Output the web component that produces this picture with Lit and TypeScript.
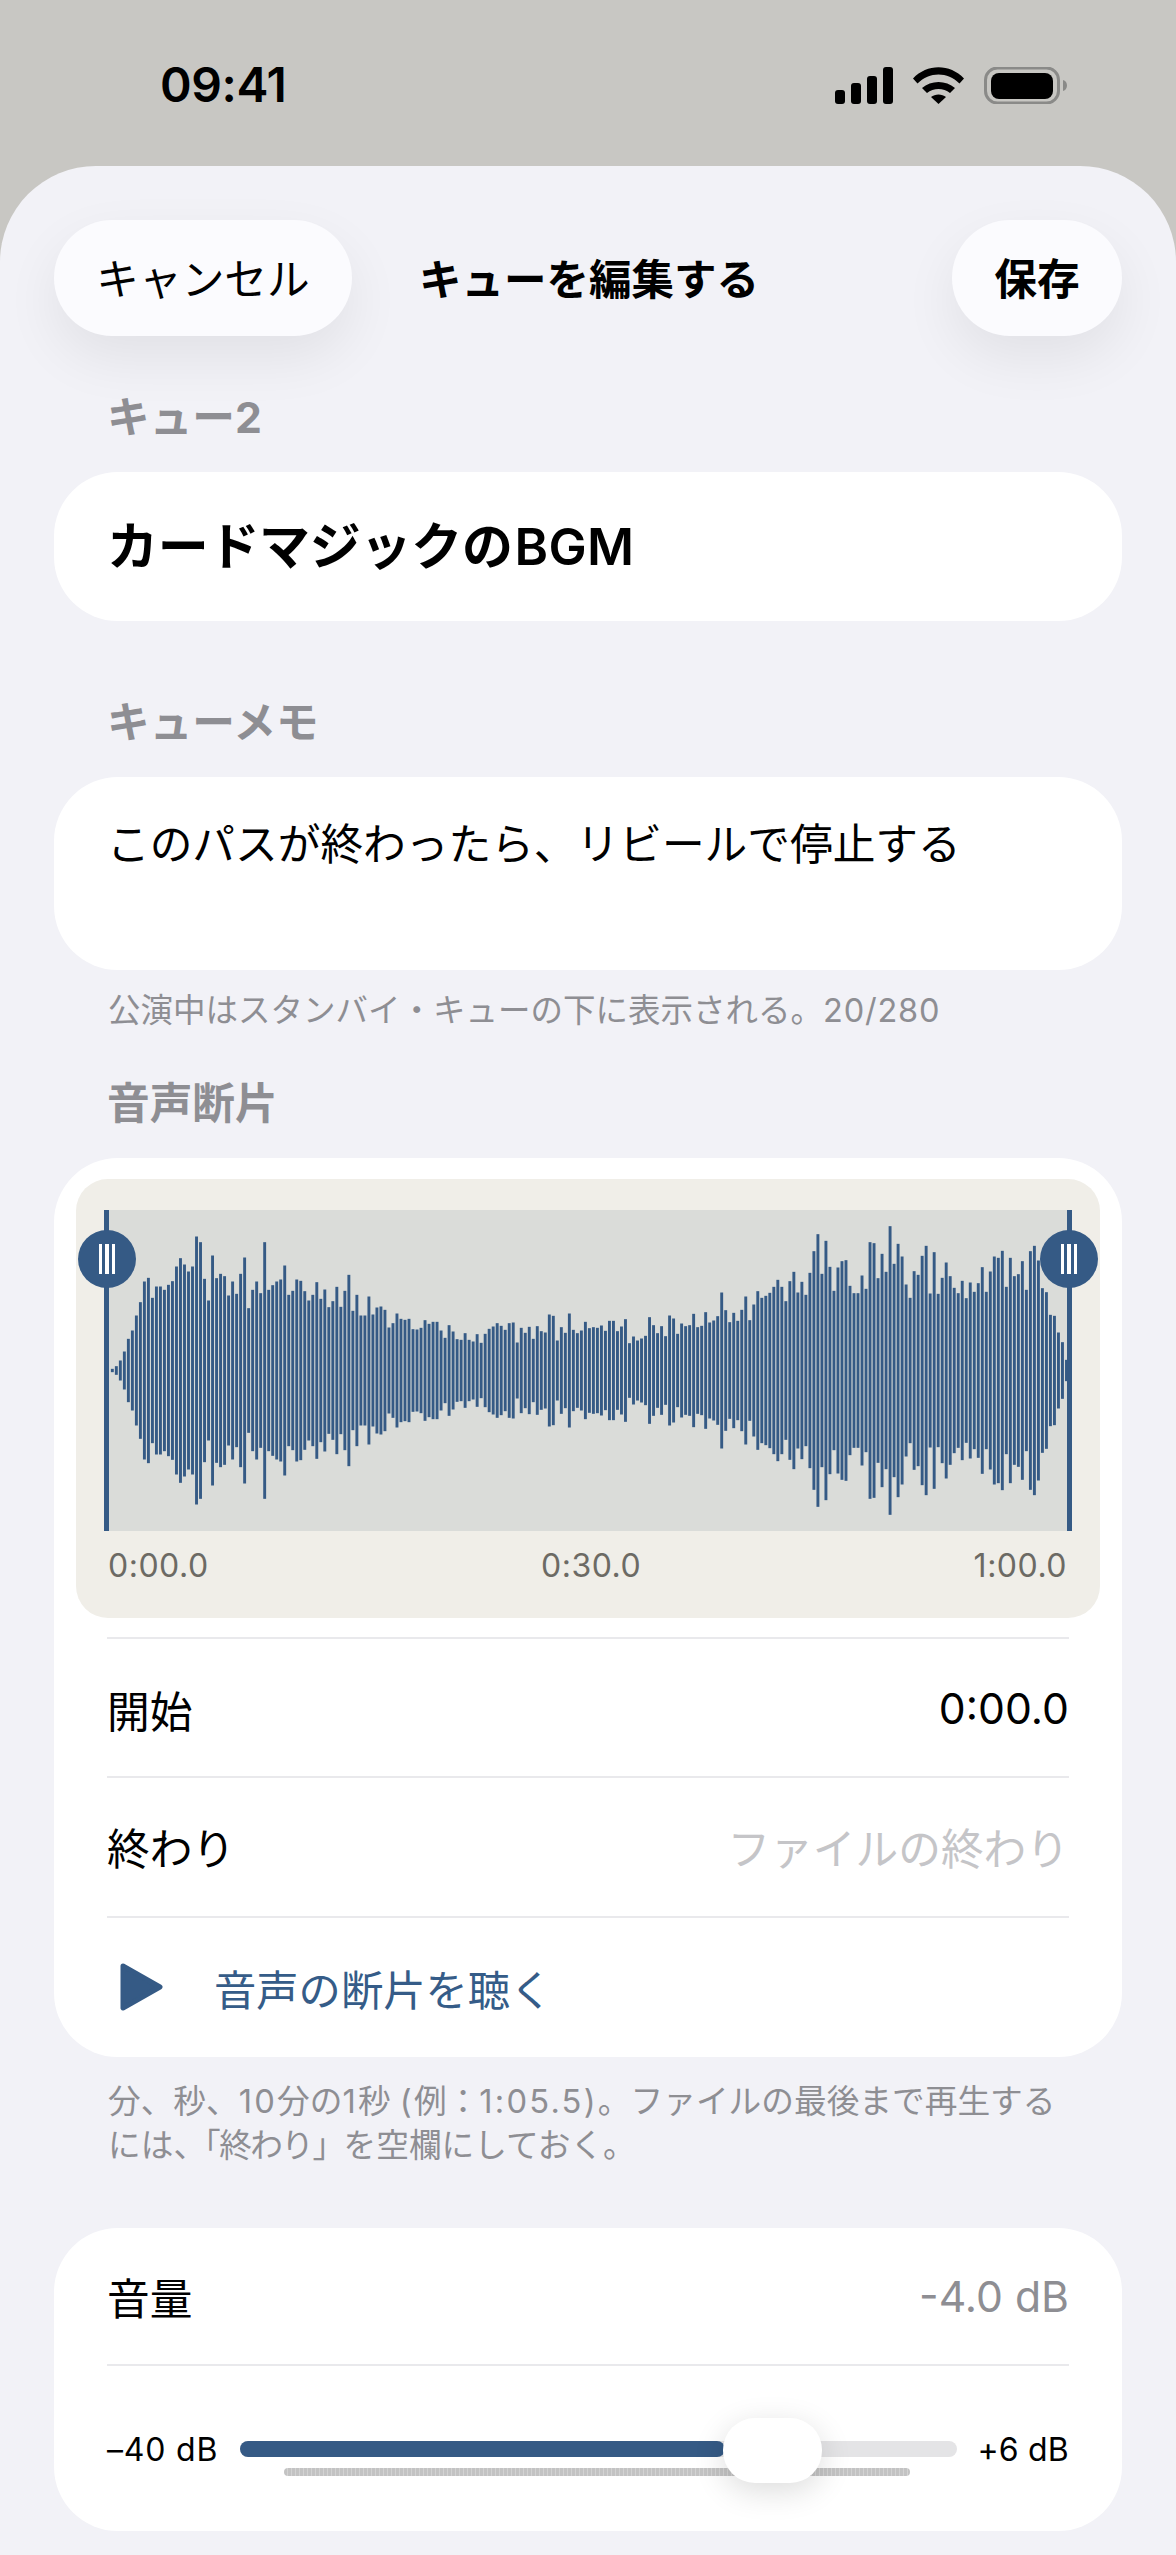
import { LitElement, html, css, svg } from "lit";
import { customElement } from "lit/decorators.js";

const TOPS = [
475,467,450,423,385,360,315,275,213,202,262,228,228,238,223,212,168,143,162,183,168,78,95,205,270,135,203,190,197,255,213,250,190,141,293,238,213,248,95,238,224,213,207,165,253,241,207,211,242,270,
253,215,265,237,290,272,229,289,241,193,301,253,315,315,258,312,291,288,298,351,338,309,325,328,325,356,357,352,329,340,334,334,360,382,344,363,386,388,368,388,393,371,397,370,355,348,338,346,358,338,
336,396,352,367,349,385,347,362,366,312,316,390,350,367,309,358,368,360,334,353,350,352,345,361,331,331,362,348,326,398,378,390,384,376,320,344,368,347,377,315,324,370,339,347,344,310,350,346,305,336,
330,317,246,299,335,307,331,298,258,329,282,242,262,256,247,229,208,229,272,212,184,246,214,253,187,122,71,190,91,169,241,171,152,149,226,248,248,195,235,95,98,203,130,184,47,160,100,138,222,262,
182,193,136,106,249,125,250,202,156,197,232,248,211,263,216,244,218,170,244,183,138,142,121,229,142,197,191,152,238,122,106,150,233,245,313,316,366,395,448,
];

@customElement("app-root")
export class AppRoot extends LitElement {
  static styles = css`
    :host {
      display: block;
      width: 1176px;
      height: 2555px;
      overflow: hidden;
      background: #c8c7c3;
      font-family: Inter, "Noto Sans CJK JP", sans-serif;
      color: #000;
      font-size: 42.7px;
    }
    .status {
      height: 166px;
      box-sizing: border-box;
      display: flex;
      justify-content: space-between;
      padding: 67px 109px 0 160px;
    }
    .clock {
      font-size: 48px;
      font-weight: 600;
      line-height: 36px;
      letter-spacing: -0.4px;
    }
    .status svg { display: block; }
    .sheet {
      box-sizing: border-box;
      height: 2389px;
      background: #f2f2f7;
      border-radius: 96px 96px 0 0;
      padding: 54px 54px 0;
      overflow: hidden;
    }
    .nav { display: flex; align-items: center; height: 116px; }
    .btn {
      box-sizing: border-box;
      height: 116px;
      border-radius: 58px;
      background: #fbfbfe;
      box-shadow: 0 22px 55px rgba(0, 0, 0, 0.07);
      display: flex;
      align-items: center;
      justify-content: center;
      padding-bottom: 4px;
    }
    .cancel { width: 298px; }
    .save { width: 170px; margin-left: auto; font-weight: 700; }
    .title { margin-left: 67px; font-weight: 700; padding-bottom: 4px; font-size: 42.5px; }
    .label {
      color: #8e8e93;
      font-weight: 700;
      line-height: 50px;
      padding-left: 53px;
      margin-bottom: 29px;
    }
    .l1 { margin-top: 57px; }
    .l2 { margin-top: 77px; }
    .l3 { margin-top: 46px; }
    .card { background: #fff; border-radius: 64px; }
    .name {
      height: 149px;
      box-sizing: border-box;
      display: flex;
      align-items: center;
      padding: 0 53px 7px;
      font-size: 51px;
      font-weight: 700;
      letter-spacing: -0.3px;
    }
    .name .latin { margin-left: 2px; font-weight: 600; letter-spacing: 0.3px; }
    .memo {
      height: 193px;
      box-sizing: border-box;
      padding: 38px 53px;
      line-height: 60px;
    }
    .hint {
      font-size: 32.7px;
      line-height: 44px;
      color: #8e8e93;
      padding-left: 54px;
    }
    .hint .num { letter-spacing: 2.2px; }
    .hint .tight { letter-spacing: -1.6px; }
    .h1 { margin-top: 19px; font-size: 32.5px; }
    .h1 .num { letter-spacing: 0.8px; }
    .h2 { margin-top: 22px; }
    .clip { height: 899px; box-sizing: border-box; padding-top: 21px; }
    .panel {
      margin: 0 22px;
      height: 439px;
      box-sizing: border-box;
      padding: 31px 28px 0;
      background: #f0eee8;
      border-radius: 32px;
    }
    .wave { position: relative; height: 321px; background: #dadcd9; }
    .wave svg { display: block; }
    .line { position: absolute; top: 0; bottom: 0; width: 5px; background: #355a85; }
    .line.a { left: 0; }
    .line.b { right: 0; }
    .knob {
      position: absolute;
      top: 20px;
      width: 58px;
      height: 58px;
      border-radius: 50%;
      background: #355a85;
      display: flex;
      align-items: center;
      justify-content: center;
      gap: 3.4px;
    }
    .knob.a { left: -26px; }
    .knob.b { right: -26px; }
    .knob i { width: 3.3px; height: 30px; background: #fff; }
    .times {
      display: flex;
      justify-content: space-between;
      padding: 15px 5px 0 4px;
      font-size: 32px;
      line-height: 40px;
      letter-spacing: 0.5px;
      color: #6c6a64;
    }
    .rows { margin: 19px 53px 0; }
    .row {
      box-sizing: border-box;
      height: 140px;
      border-top: 2px solid #e9e9ec;
      display: flex;
      align-items: center;
      justify-content: space-between;
    }
    .row.r1 { padding-top: 2px; height: 139px; }
    .row.r2 { padding-bottom: 2px; }
    .ph { color: #c5c5c8; }
    .play { gap: 50px; padding-left: 13px; color: #355c88; font-size: 42.3px; }
    .play svg { display: block; flex: none; }
    .play span { flex: 1; }
    .vol { height: 303px; margin-top: 61px; box-sizing: border-box; }
    .vol-head {
      margin: 0 53px;
      height: 138px;
      box-sizing: border-box;
      display: flex;
      align-items: center;
      justify-content: space-between;
      border-bottom: 2px solid #e9e9ec;
    }
    .gray { color: #8e8e93; }
    .slider {
      margin: 0 53px;
      height: 166px;
      display: flex;
      align-items: center;
      justify-content: space-between;
      font-size: 32px;
    }
    .slider .min { width: 133px; letter-spacing: 0.8px; }
    .track {
      position: relative;
      flex: none;
      width: 717px;
      height: 16px;
      border-radius: 8px;
      background: #e4e4e6;
    }
    .slider .max { width: 112px; text-align: right; letter-spacing: 0.2px; }
    .fill { height: 100%; border-radius: 8px; background: #355a85; }
    .strip {
      position: absolute;
      left: 44px;
      top: 27px;
      width: 626px;
      height: 8px;
      border-radius: 4px;
      background: repeating-linear-gradient(90deg, #c3c3c3 0 2.5px, #d3d3d3 2.5px 4px);
    }
    .thumb {
      position: absolute;
      left: 483px;
      top: -23px;
      width: 99px;
      height: 65px;
      border-radius: 32px;
      background: #fff;
      box-shadow: 0 8px 32px rgba(0, 0, 0, 0.14);
    }
  `;

  private statusIcons() {
    return html`<svg width="232" height="37" viewBox="0 0 232 37">
      <rect x="0" y="23" width="10" height="14" rx="3" />
      <rect x="16" y="16" width="10" height="21" rx="3" />
      <rect x="32" y="9" width="10" height="28" rx="3" />
      <rect x="48" y="0" width="10" height="37" rx="3" />
      <g transform="translate(78 0)">
        <path d="M0 11.5C14-3.5 37-3.5 51 11.5L46.5 16.5C34.5 4.5 16.5 4.5 4.500 16.500Z" />
        <path d="M9 21C18 13 33 13 42 21L37 26C30.5 20.5 20.5 20.5 14 26Z" />
        <path d="M18 30C22 26.5 29 26.5 33 30L25.5 37Z" />
      </g>
      <rect x="150.5" y="1" width="73" height="35" rx="12" fill="none" stroke="#8a8a88" stroke-width="3" />
      <rect x="156" y="6" width="62" height="26" rx="8" />
      <path d="M228 13c2.600.5 4 3 4 5.500s-1.400 5-4 5.500Z" fill="#8a8a88" />
    </svg>`;
  }

  private waveform() {
    const w = 968;
    const h = 321;
    const cy = 160.5;
    return html`<svg width=${w} height=${h} viewBox="0 0 ${w} ${h}">
      ${TOPS.map((t, i) => {
        const half = Math.max((480 - t) / 3, 1.5);
        const x = 8.33 + i * 4.009 - 1.45;
        return svg`<rect x=${x} y=${cy - half} width="2.9" height=${half * 2} fill="#355a85" />`;
      })}
    </svg>`;
  }

  render() {
    const knob = html`<i></i><i></i><i></i>`;
    return html`
      <div class="status">
        <div class="clock">09:41</div>
        ${this.statusIcons()}
      </div>
      <div class="sheet">
        <div class="nav">
          <div class="btn cancel">キャンセル</div>
          <div class="title">キューを編集する</div>
          <div class="btn save">保存</div>
        </div>

        <div class="label l1">キュー2</div>
        <div class="card name"><span>カードマジックの<span class="latin">BGM</span></span></div>

        <div class="label l2">キューメモ</div>
        <div class="card memo">このパスが終わったら、リビールで停止する</div>
        <div class="hint h1">公演中はスタンバイ・キューの下に表示される。<span class="num">20/280</span></div>

        <div class="label l3">音声断片</div>
        <div class="card clip">
          <div class="panel">
            <div class="wave">
              ${this.waveform()}
              <div class="line a"></div>
              <div class="line b"></div>
              <div class="knob a">${knob}</div>
              <div class="knob b">${knob}</div>
            </div>
            <div class="times"><span>0:00.0</span><span>0:30.0</span><span>1:00.0</span></div>
          </div>
          <div class="rows">
            <div class="row r1"><span>開始</span><span>0:00.0</span></div>
            <div class="row r2"><span>終わり</span><span class="ph">ファイルの終わり</span></div>
            <div class="row play">
              <svg width="44" height="48" viewBox="0 0 44 48">
                <path d="M3 3L40 24L3 45Z" fill="#355a85" stroke="#355a85" stroke-width="5" stroke-linejoin="round" />
              </svg>
              <span>音声の断片を聴く</span>
            </div>
          </div>
        </div>
        <div class="hint h2">分、秒、<span class="num">10</span>分の<span class="num">1</span>秒 <span class="num">(</span>例：<span class="num">1:05.5)</span>。ファイルの最後まで再生する<br />には<span class="tight">、「終わり」</span>を空欄にしておく。</div>

        <div class="card vol">
          <div class="vol-head"><span>音量</span><span class="gray">-4.0 dB</span></div>
          <div class="slider">
            <span class="min">–40 dB</span>
            <div class="track">
              <div class="fill" style="width:${(485 / 717) * 100}%"></div>
              <div class="strip"></div>
              <div class="thumb"></div>
            </div>
            <span class="max">+6 dB</span>
          </div>
        </div>
      </div>
    `;
  }
}
